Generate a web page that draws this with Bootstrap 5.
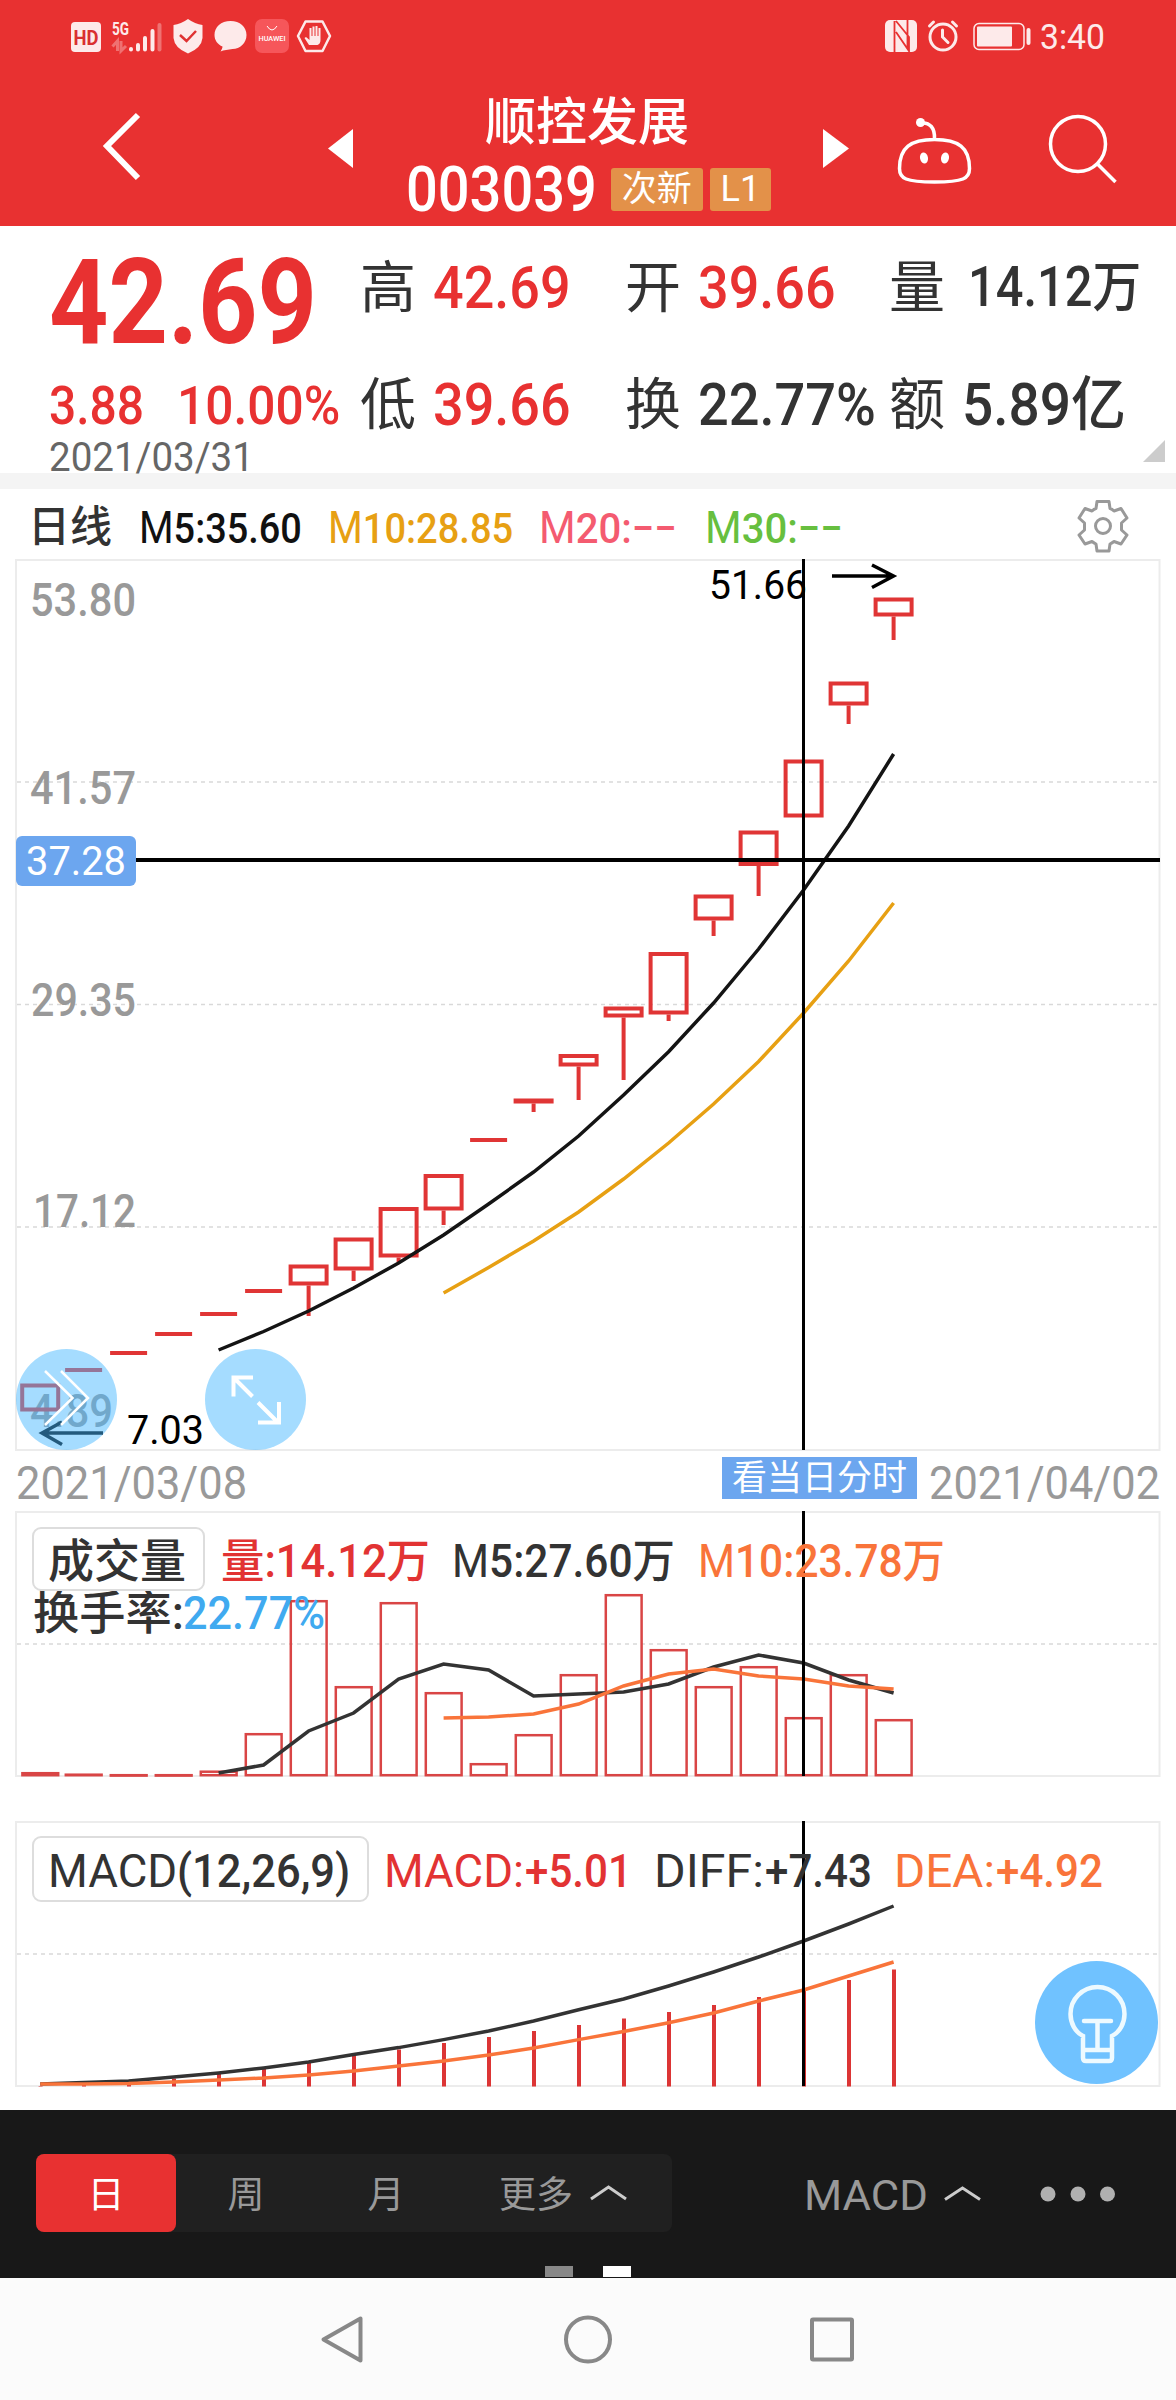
<!DOCTYPE html>
<html lang="zh-CN">
<head>
<meta charset="utf-8">
<meta name="viewport" content="width=device-width, initial-scale=1">
<title>顺控发展 003039</title>
<link rel="stylesheet" href="https://cdn.jsdelivr.net/npm/bootstrap@5.3.0/dist/css/bootstrap.min.css">
<style>
:root{--up:#e83131;--ink:#333;--tag:#6ca6ef}
body{font-family:Roboto,"Noto Sans CJK SC",sans-serif;background:#fff;color:var(--ink);width:1176px;line-height:1;overflow-x:hidden}
svg{display:block;overflow:visible}
svg text{white-space:pre}
.fit{display:inline-block;white-space:pre;transform-origin:0 50%;line-height:1}
.red{color:var(--up)}
.app-head{background:var(--up);height:226px;color:#fff}
.status-row{height:72px}
.title-row{height:154px;display:grid;grid-template-columns:100px 225px 75px 420px 75px 165px 1fr}
.title-row>*{min-width:0}
.stock-name{font-size:51px;font-weight:500;height:50px;margin-top:25px;padding-left:85px}
.stock-code{height:46px;margin-top:19px;padding-left:6px}
.stock-code .fit{font-size:63px;font-weight:500}
.chip{background:#e39149;height:43px;border-radius:3px;font-size:35px;color:#fff}
.chip-a{width:92px;margin-left:14px}
.chip-b{width:61px;margin-left:7px;font-size:36px}
.quote{height:247px;display:grid;grid-template-columns:311px 265px 264px 1fr;padding-left:49px;position:relative}
.price{font-size:118px;font-weight:700;height:118px;margin-top:18px}
.chg{font-size:53px;font-weight:500;height:53px;margin-top:18px}
.chg .pct{margin-left:33px}
.day{font-size:40px;color:#666;height:40px;margin-top:5px}
.stat{height:61px;margin-top:31px;font-size:56px}
.stat+.stat{margin-top:56px}
.stat .fit{font-size:59px;font-weight:500;margin-left:17px}
.stat .fit.vol-n{font-size:55px;margin-left:23px}
.more-corner{position:absolute;right:11px;bottom:11px;width:22px;height:22px;background:#ccc;clip-path:polygon(100% 0,100% 100%,0 100%)}
.band{height:16px;background:#f4f4f4}
.legend-row{height:70px;padding:0 0 0 28px;display:grid;grid-template-columns:111px 189px 211px 166px 372px 1fr;align-items:center}
.legend-row .fit{font-size:43px;font-weight:500;margin-top:6px}
.legend-row b{font-weight:400;font-size:45px}
.legend-row svg{margin-top:4px}
.panel-box{position:relative}
.date-row{height:60px;padding:2px 16px 0;font-size:47px;color:#999}
.tag-day{background:var(--tag);color:#fff;width:195px;height:42px;font-size:35px;font-weight:400}
.date-end{margin-left:12px}
.ind-btn{position:absolute;left:32px;border:2px solid #ddd;border-radius:9px;background:#fff;color:var(--ink);display:flex;align-items:center}
.ind-vol{top:16px;width:173px;height:64px;padding:3px 0 0 14px;font-size:46px;font-weight:500}
.ind-macd{top:15px;width:337px;height:66px;padding:3px 0 0 14px;font-size:47px;font-weight:400}
.ind-macd b{font-weight:500}
.round-btn{position:absolute;width:101px;height:101px;border-radius:50%;background:rgba(71,183,255,.49)}
.rb-a{left:16px;top:790px}.rb-b{left:205px;top:790px;}
.bulb-btn{position:absolute;left:1035px;top:140px;width:123px;height:123px;border-radius:50%;background:#70c2ff}
.tool-bar{margin-top:24px;height:168px;background:#181818;color:#999;position:relative;padding:44px 0 0 36px}
.seg{width:636px;height:78px;background:#202020;border-radius:8px;font-size:37px}
.seg>span{width:140px;height:78px;padding-top:4px}
.seg>.act{background:var(--up);color:#fff;border-radius:8px}
.seg>.more-seg{width:216px;padding-left:43px}
.macd-sel{margin-left:132px;font-size:43px;padding-top:1px}
.macd-sel .dots{margin-left:52px}
.pager-tick{position:absolute;bottom:1px;left:545px}
.sys-nav{height:122px;background:#fbfbfb}
</style>
<script src="https://cdn.jsdelivr.net/npm/bootstrap@5.3.0/dist/js/bootstrap.bundle.min.js"></script>
</head>
<body>
<header class="app-head">
  <div class="status-row">
    <svg width="1176" height="72" viewBox="0 0 1176 72" fill="#fdeaea">
      <rect x="71" y="22" width="30" height="30" rx="4"/>
      <text x="73.500" y="44.500" font-size="20" font-weight="700" fill="#d93030" textLength="25" lengthAdjust="spacingAndGlyphs">HD</text>
      <text x="112" y="34.500" font-size="19" font-weight="700" textLength="17" lengthAdjust="spacingAndGlyphs">5G</text>
      <g stroke="#fdeaea" stroke-width="4" stroke-linecap="round"><path d="M131 49v.5M138 45v4.500M145 38v11.500M152.500 31v18.500"/><path d="M159.500 25v24.500" opacity=".35"/></g>
      <path d="M112.500 46.500l5-5.500v10M126 46l-5 5V41" stroke="#fdeaea" stroke-width="3" opacity=".35" fill="none"/>
      <path d="M188 19q7 5 14.500 6v13q-1 10-14.500 15.500q-13.500-5.500-14.500-15.500V25q7.500-1 14.500-6z"/>
      <path d="M180 35l6.500 6L196 31" fill="none" stroke="#df3131" stroke-width="2.500"/>
      <path d="M230.500 21c9.500 0 16 6 16 14s-6.500 14-14 14c-4 .500-9 1-12 2.500c1-2 2-3 2-5c-5-2-8-6.500-8-11.500c0-8 6.500-14 16-14z"/>
      <rect x="255" y="19" width="34" height="34" rx="7" fill="#f6565a"/>
      <path d="M267 26q5 8 10 0" fill="none" stroke="#fff" stroke-width="1"/>
      <text x="258.500" y="41" font-size="7.500" font-weight="500" fill="#fff" textLength="27" lengthAdjust="spacingAndGlyphs">HUAWEI</text>
      <path d="M305.500 21.500h17l7.500 14.500-7.500 15h-17l-7.500-15z" fill="none" stroke="#fdeaea" stroke-width="2.500" stroke-linejoin="round"/>
      <path d="M309 45l-4.500-7 1.500-1 3.500 3V28h2v8h1v-9.500h2v9.500h1v-10h2v10h1v-8h2v12q0 4-3 5z"/>
      <rect x="885" y="20" width="32" height="32" rx="5"/>
      <path d="M894.500 52V21M896 32l13 19V37L896 21M907.500 20V49" fill="none" stroke="#e83131" stroke-width="1.800"/>
      <g fill="none" stroke="#fdeaea" stroke-width="3" stroke-linecap="round"><circle cx="943" cy="37" r="13"/><path d="M942.500 30v7l5.500 5.500M929.500 26l4-4M956.500 26l-4-4"/></g>
      <rect x="974" y="23.500" width="50" height="26" rx="5" fill="none" stroke="#fdeaea" stroke-width="1.500"/><rect x="977" y="26.500" width="35" height="20" rx="1"/><rect x="1026.500" y="28" width="4" height="17" rx="2"/>
      <text x="1040" y="49" font-size="35" textLength="65" lengthAdjust="spacingAndGlyphs">3:40</text>
    </svg>
  </div>
  <div class="title-row">
    <span></span>
    <svg width="50" height="154" viewBox="100 72 50 154"><path d="M138 115l-31 31L138 178" fill="none" stroke="#fff" stroke-width="6"/></svg>
    <svg width="40" height="154" viewBox="325 72 40 154"><path d="M353 129v39l-25-19.500z" fill="#fff"/></svg>
    <div>
      <div class="stock-name">顺控发展</div>
      <div class="stock-code d-flex align-items-center"><span class="fit" data-w="191">003039</span><span class="chip chip-a d-flex align-items-center justify-content-center">次新</span><span class="chip chip-b d-flex align-items-center justify-content-center">L1</span></div>
    </div>
    <svg width="40" height="154" viewBox="820 72 40 154"><path d="M823 129v39l26-19.500z" fill="#fff"/></svg>
    <svg width="90" height="154" viewBox="895 72 90 154" fill="none" stroke="#fff" stroke-width="3.500"><circle cx="920.500" cy="122.500" r="4.500" fill="#fff" stroke="none"/><path d="M921 123c9-1 14 5 13.500 16M934.500 139.500c24 0 35 8 35 29c0 10-6 13.500-35 13.500s-35-3.500-35-13.500c0-21 11-29 35-29z"/><g fill="#fff" stroke="none"><ellipse cx="924" cy="158" rx="4" ry="5.500" transform="rotate(-12 924 158)"/><ellipse cx="945" cy="158" rx="4" ry="5.500" transform="rotate(12 945 158)"/></g></svg>
    <svg width="90" height="154" viewBox="1060 72 90 154" fill="none" stroke="#fff" stroke-width="3.500"><circle cx="1078" cy="144" r="27.500"/><path d="M1097 163.500l18.500 18.500"/></svg>
  </div>
</header>

<section class="quote">
  <div>
    <div class="price red"><span class="fit" data-w="268">42.69</span></div>
    <div class="chg red d-flex"><span class="fit" data-w="95">3.88</span><span class="fit pct" data-w="163">10.00%</span></div>
    <div class="day"><span class="fit" data-w="205">2021/03/31</span></div>
  </div>
  <div>
    <div class="stat d-flex align-items-center">高<span class="fit red" data-w="138">42.69</span></div>
    <div class="stat d-flex align-items-center">低<span class="fit red" data-w="138">39.66</span></div>
  </div>
  <div>
    <div class="stat d-flex align-items-center">开<span class="fit red" data-w="138">39.66</span></div>
    <div class="stat d-flex align-items-center">换<span class="fit" data-w="178">22.77%</span></div>
  </div>
  <div>
    <div class="stat d-flex align-items-center">量<span class="fit vol-n" data-w="173">14.12万</span></div>
    <div class="stat d-flex align-items-center">额<span class="fit" data-w="164">5.89亿</span></div>
  </div>
  <span class="more-corner"></span>
</section>
<div class="band"></div>

<section class="legend-row">
  <span class="fit" data-w="84">日线</span>
  <span class="fit" data-w="163" style="color:#111"><b>M</b>5:35.60</span>
  <span class="fit" data-w="185" style="color:#e7a013"><b>M</b>10:28.85</span>
  <span class="fit" data-w="138" style="color:#f45b70"><b>M</b>20:−−</span>
  <span class="fit" data-w="138" style="color:#67bf3f"><b>M</b>30:−−</span>
  <svg width="52" height="54" viewBox="-26 -27 52 54" fill="none" stroke="#999" stroke-width="3"><circle r="7.500"/><path stroke-linejoin="round" d="M-6-24.500H6L7-17.500Q9-17 11-15L18-17.500L24-8L18.500-3V4L24 9L18 18L11 15.500Q9 17 7 18L6 25H-6L-7 18Q-9 17-11 15.500L-18 18L-24 9L-18.500 4V-3L-24-8L-18-17.500L-11-15Q-9-17-7-17.500Z"/></svg>
</section>

<section class="panel-box">
  <svg id="kline" width="1176" height="892" viewBox="0 559 1176 892">
    <rect x="16" y="560" width="1143.500" height="890" fill="none" stroke="#ececec" stroke-width="2"/>
    <path d="M17 782H1160M17 1004.500H1160M17 1227H1160" stroke="#d9d9d9" stroke-width="1.500" stroke-dasharray="4 4"/>
    <g font-size="47" font-weight="500" fill="#999">
      <text x="30" y="616" textLength="106" lengthAdjust="spacingAndGlyphs">53.80</text>
      <text x="30" y="804" textLength="106" lengthAdjust="spacingAndGlyphs">41.57</text>
      <text x="31" y="1016" textLength="105" lengthAdjust="spacingAndGlyphs">29.35</text>
      <text x="33" y="1227" textLength="103" lengthAdjust="spacingAndGlyphs">17.12</text>
      <text x="30" y="1427" textLength="83" lengthAdjust="spacingAndGlyphs">4.89</text>
    </g>
    <g id="candles" fill="none" stroke="#e03535" stroke-width="4"></g>
    <polyline id="ma5" fill="none" stroke="#141414" stroke-width="3.500"/>
    <polyline id="ma10" fill="none" stroke="#e7a013" stroke-width="3.500"/>
    <g font-size="40" fill="#000">
      <text x="709" y="599" textLength="98" lengthAdjust="spacingAndGlyphs">51.66</text>
      <text x="127" y="1444" textLength="77" lengthAdjust="spacingAndGlyphs">7.03</text>
    </g>
    <path d="M832 576h61M872 565l21.500 11-21.500 11.500M103 1433H42M62 1422l-20 11 20 11.500" fill="none" stroke="#000" stroke-width="3.500"/>
    <path d="M803.500 559v891" stroke="#000" stroke-width="3"/><path d="M136 860H1160" stroke="#000" stroke-width="4"/>
    <rect x="16" y="836" width="120" height="50" rx="6" fill="#6ca6ef"/>
    <text x="26" y="875" font-size="40" fill="#fff" textLength="100" lengthAdjust="spacingAndGlyphs">37.28</text>
  </svg>
  <span class="round-btn rb-a"><svg width="101" height="101" viewBox="16 1349 101 101" fill="none" stroke="#fff" stroke-width="2.500"><path d="M45 1371l27.500 27-27.500 27M61 1371l27 27-27 27"/></svg></span>
  <span class="round-btn rb-b"><svg width="101" height="101" viewBox="205 1349 101 101" fill="none" stroke="#fff" stroke-width="4"><path d="M253 1377.500h-19.500v19M234 1378l18.500 18.500M258 1402.500l20 20M279 1402v20.500h-21"/></svg></span>
</section>

<div class="date-row d-flex align-items-center">
  <span class="fit" data-w="231">2021/03/08</span>
  <span class="tag-day ms-auto d-flex align-items-center justify-content-center mb-2">看当日分时</span>
  <span class="fit date-end" data-w="231">2021/04/02</span>
</div>

<section class="panel-box">
  <svg width="1176" height="266" viewBox="0 1511 1176 266">
    <rect x="16" y="1512" width="1143.500" height="264" fill="none" stroke="#ececec" stroke-width="2"/>
    <path d="M17 1644H1160" stroke="#d9d9d9" stroke-width="1.500" stroke-dasharray="4 4"/>
    <g id="vols" fill="none" stroke="#d94545" stroke-width="2.500"></g>
    <polyline id="vma5" fill="none" stroke="#333" stroke-width="3.500"/>
    <polyline id="vma10" fill="none" stroke="#f9743a" stroke-width="3.500"/>
    <path d="M803.500 1511v265" stroke="#000" stroke-width="3"/>
    <g font-size="46" font-weight="500">
      <text x="221" y="1577" fill="#e23333" textLength="209" lengthAdjust="spacingAndGlyphs">量:14.12万</text>
      <text x="452" y="1577" fill="#333" textLength="223" lengthAdjust="spacingAndGlyphs"><tspan font-weight="400">M</tspan>5:27.60万</text>
      <text x="698" y="1577" fill="#f9743a" textLength="247" lengthAdjust="spacingAndGlyphs"><tspan font-weight="400">M</tspan>10:23.78万</text>
      <text x="33" y="1629" fill="#333" textLength="151" lengthAdjust="spacingAndGlyphs">换手率:</text>
      <text x="183" y="1629" fill="#40aaf0" textLength="142" lengthAdjust="spacingAndGlyphs">22.77%</text>
    </g>
  </svg>
  <span class="ind-btn ind-vol">成交量</span>
</section>

<section class="panel-box" style="padding-top:44px">
  <div class="panel-box">
  <svg width="1176" height="265" viewBox="0 1821 1176 265">
    <rect x="16" y="1822" width="1143.500" height="264" fill="none" stroke="#ececec" stroke-width="2"/>
    <path d="M17 1954H1160" stroke="#d9d9d9" stroke-width="1.500" stroke-dasharray="4 4"/>
    <g id="hist" stroke="#dc3535" stroke-width="4"></g>
    <polyline id="diff" fill="none" stroke="#333" stroke-width="3.500"/>
    <polyline id="dea" fill="none" stroke="#f9743a" stroke-width="3.500"/>
    <path d="M803.500 1821v265" stroke="#000" stroke-width="3"/>
    <g font-size="47" font-weight="400">
      <text x="384" y="1887" fill="#e23333" textLength="140" lengthAdjust="spacingAndGlyphs">MACD:</text>
      <text x="525" y="1887" fill="#e23333" font-weight="500" textLength="107" lengthAdjust="spacingAndGlyphs">+5.01</text>
      <text x="654" y="1887" fill="#333" textLength="110" lengthAdjust="spacingAndGlyphs">DIFF:</text>
      <text x="765" y="1887" fill="#333" font-weight="500" textLength="107" lengthAdjust="spacingAndGlyphs">+7.43</text>
      <text x="894" y="1887" fill="#f9743a" textLength="101" lengthAdjust="spacingAndGlyphs">DEA:</text>
      <text x="996" y="1887" fill="#f9743a" font-weight="500" textLength="107" lengthAdjust="spacingAndGlyphs">+4.92</text>
    </g>
  </svg>
  <span class="ind-btn ind-macd"><span class="fit" data-w="129">MACD</span><b class="fit" data-w="173">(12,26,9)</b></span>
  <span class="bulb-btn"><svg width="123" height="123" viewBox="1035 1961 123 123" fill="none" stroke="#eefaff" stroke-width="4.500"><path d="M1083 2058v-22c-8-4-12.500-13-12.500-22a27 27 0 0 1 54 0c0 9-4.500 18-12.500 22v22q0 3-3 3h-23q-3 0-3-3zM1084 2021h27M1097.500 2021v28M1083 2050h29" stroke-linecap="round"/></svg></span>
  </div>
</section>

<footer>
  <div class="tool-bar d-flex align-items-start">
    <div class="seg d-flex">
      <span class="act d-flex align-items-center justify-content-center">日</span>
      <span class="d-flex align-items-center justify-content-center">周</span>
      <span class="d-flex align-items-center justify-content-center">月</span>
      <span class="more-seg d-flex align-items-center">更多<svg class="ms-3" width="38" height="16" viewBox="0 2 38 16" fill="none" stroke="#ccc" stroke-width="3"><path d="M2 14L19.500 2 37 14"/></svg></span>
    </div>
    <div class="seg bg-transparent d-flex align-items-center macd-sel w-auto"><span class="fit w-auto h-auto" data-w="124">MACD</span><svg width="38" height="16" viewBox="-14 0 38 16" fill="none" stroke="#ccc" stroke-width="3"><path d="M3 13.500L20.500 2 38 13.500"/></svg>
    <svg class="dots" width="90" height="16" viewBox="-22 0 90 16" fill="#b0b0b0"><circle cx="8" cy="8" r="7.500"/><circle cx="38" cy="8" r="7.500"/><circle cx="67.500" cy="8" r="7.500"/></svg></div>
    <svg class="pager-tick" width="90" height="11"><rect width="28" height="11" fill="#888"/><rect x="58" width="28" height="11" fill="#fff"/></svg>
  </div>
  <div class="sys-nav">
    <svg width="1176" height="122" viewBox="0 2278 1176 122" fill="none" stroke="#888" stroke-width="4" stroke-linejoin="round"><path d="M360.500 2318.500v42L323.500 2339.500z"/><circle cx="588" cy="2339.500" r="22"/><rect x="812" y="2319.500" width="40" height="40" rx="1"/></svg>
  </div>
</footer>
<script>
// the first day of the series sits slightly right of the regular grid
const cx = i => 38.6 + 45 * i + (i ? 0 : 1.6);
const el = id => document.getElementById(id);
const line = (id, start, ys) => el(id).setAttribute('points', ys.map((y, k) => cx(start + k) + ',' + y).join(' '));

// [body top, body bottom, wick bottom]; a single value is a limit-up day with one price
const candles = [[1383.5,1411.5],[1370],[1353],[1334],[1314],[1291],[1264.5,1285.5,1316],[1237.5,1270.5,1281],[1207,1257.5,1262],[1174,1210.5,1225],[1140],[1098.5,1103.5,1112],[1054,1066.5,1100],[1006.5,1017.5,1080],[952,1014.5,1021],[894.5,920.5,936],[830.5,866,896],[759.5,817.5],[681.5,705.5,724],[597.5,616.5,640]];
el('candles').innerHTML = candles.map(([t, b, w], i) => {
  const c = cx(i);
  if (!b) return `<path d="M${c - 18.5} ${t}h37"/>`;
  return `<rect x="${c - 18}" y="${t + 2}" width="36" height="${Math.max(1, b - t - 4)}"/>` + (w ? `<path d="M${c} ${b}V${w}"/>` : '');
}).join('');
line('ma5', 4, [1350,1331.5,1311,1288,1263,1235,1204,1172,1136,1095,1051.7,1003,949,890,826,754]);
line('ma10', 9, [1293,1267.5,1241,1212,1179,1143,1104,1061.5,1013,961,903]);

const vols = [1772,1773.5,1774,1774,1770.5,1733,1600,1686,1602,1692,1763,1734,1674,1594,1649,1686,1666,1717,1674,1719];
el('vols').innerHTML = vols.map((t, i) => `<rect x="${cx(i) - 17.8}" y="${t + 1.2}" width="35.8" height="${Math.max(.4, 1774 - t)}"/>`).join('');
line('vma5', 4, [1773,1765,1731,1713,1679,1664,1670,1696,1694,1692,1684,1667,1655,1663,1680,1693]);
line('vma10', 9, [1718,1717,1714,1704,1686,1674,1669,1676,1679,1686,1689]);

const hist = [2086,2084.7,2084.7,2078.6,2074,2068.6,2063,2055.6,2049.5,2043,2037,2031,2025,2018.5,2012,2005,1997,1989,1980,1969.5];
el('hist').innerHTML = hist.map((t, i) => `<path d="M${cx(i) + .4} 2086.500V${t}"/>`).join('');
line('diff', 0, [2084,2082.5,2081,2077,2073,2068,2062,2054.5,2047.6,2039.6,2031,2021,2009.7,1999,1986,1972,1957,1941,1924,1906]);
line('dea', 0, [2084,2084,2083.6,2082,2080,2078,2075,2071,2066,2061,2055,2048,2039.6,2031.5,2022.7,2013,2001,1990,1976,1962]);

// condense each number to the width of its slot
document.querySelectorAll('.fit').forEach(e => {
  e.style.justifySelf = 'start';
  const n = e.offsetWidth, w = +e.dataset.w;
  e.style.transform = `scaleX(${w / n})`;
  e.style.marginRight = (w - n) + 'px';
  e.style.flexShrink = 0;
});
</script>
</body>
</html>
